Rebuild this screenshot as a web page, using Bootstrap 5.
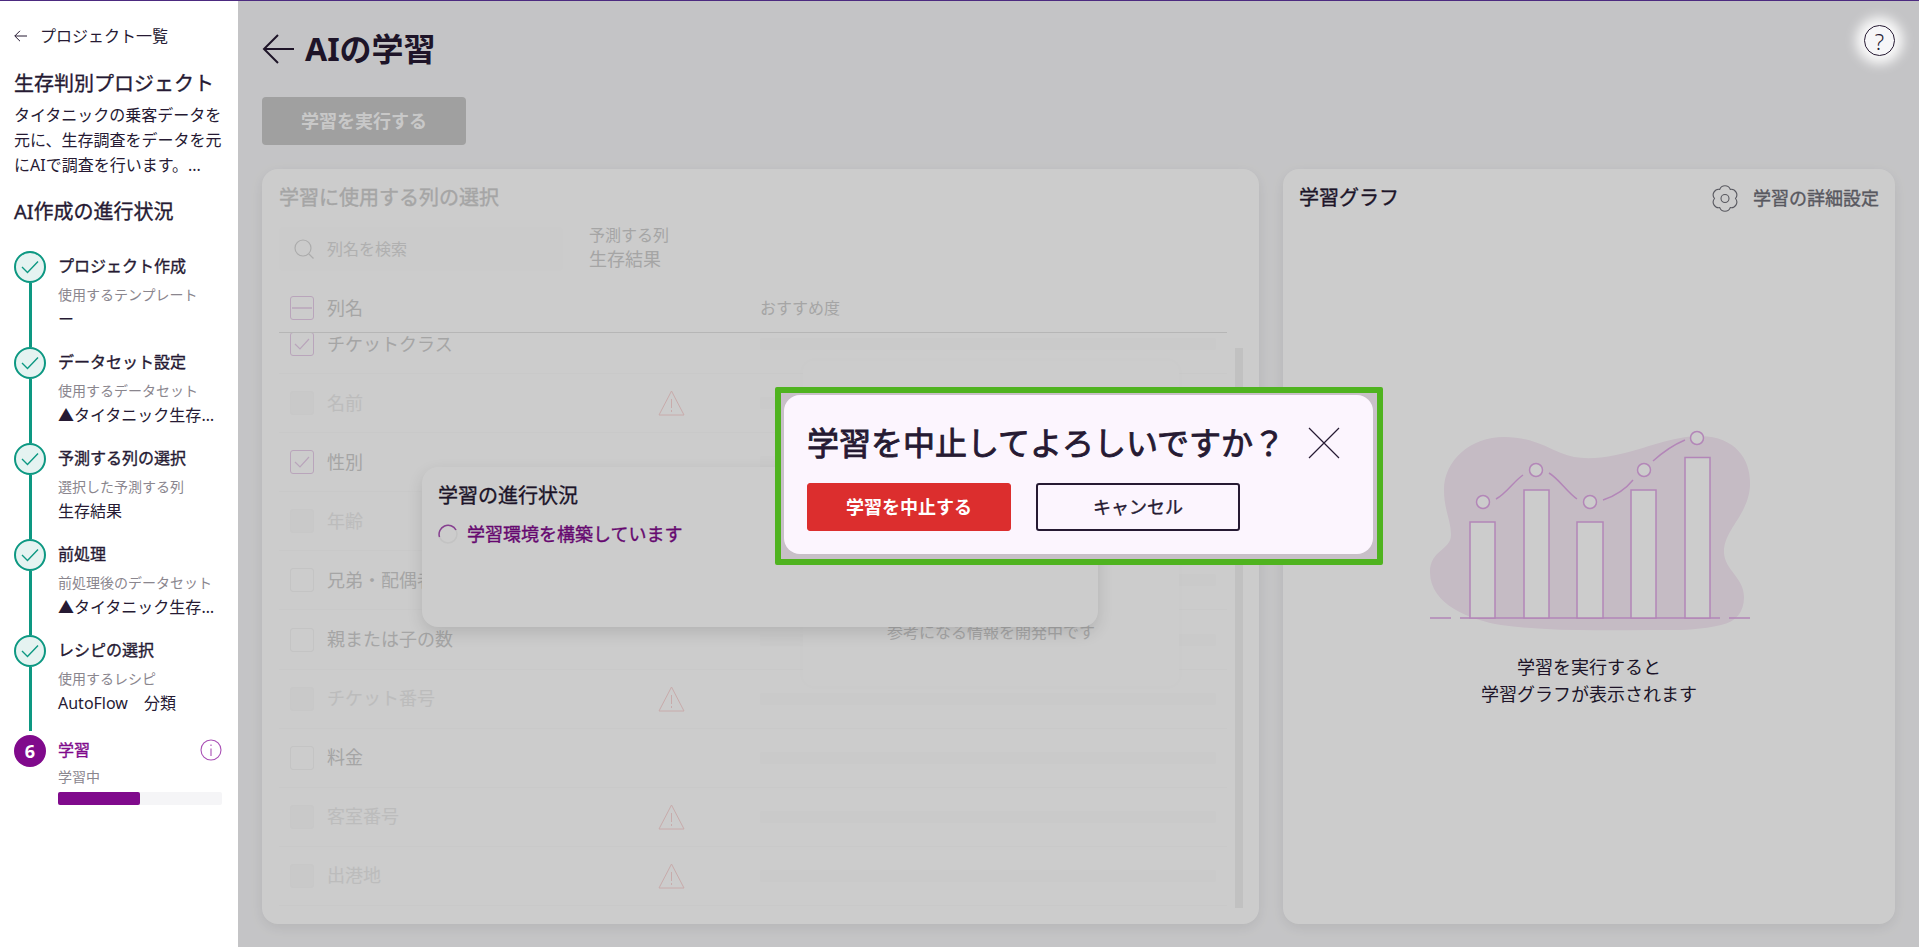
<!DOCTYPE html>
<html lang="ja">
<head>
    <meta charset="UTF-8">
    <meta name="viewport" content="width=device-width, initial-scale=1.0">
    <title>AIの学習</title>
    <link href="https://cdn.jsdelivr.net/npm/bootstrap@5.3.0/dist/css/bootstrap.min.css" rel="stylesheet">
    <style>
        html, body { height: 100%; overflow: hidden; }
        body {
            font-family: "Noto Sans", "Noto Sans CJK JP", sans-serif;
            color: #261a33;
            background: #fff;
        }

        .app-shell { height: 947px; border-top: 1px solid #4c2a80; }

        /* no medium weight installed, thicken the regular one */
        .semi-text { font-weight: 400; -webkit-text-stroke: .35px currentColor; }

        /* sidebar */
        .side-panel { width: 238px; flex: 0 0 238px; background: #fff; padding: 23px 16px 0 14px; }
        .back-link { font-size: 16px; line-height: 24px; color: #261a33; gap: 13px; }
        .project-name { font-size: 20px; line-height: 28px; margin: 22px 0 0 0; }
        .project-desc { font-size: 16px; line-height: 25px; margin: 5px -8px 0 0; }
        .progress-title { font-size: 20px; line-height: 28px; margin: 20px 0 25px 0; }
        .step-row { height: 96px; gap: 12px; }
        .step-row.step-tall { height: 100px; }
        .step-rail { width: 32px; flex: 0 0 32px; }
        .step-dot {
            width: 32px; height: 32px; border-radius: 50%;
            border: 2px solid #0d9882; background: #e5f3f1;
            flex: 0 0 32px;
        }
        .step-dot.step-now { background: #800a8c; border-color: #800a8c; color: #fff; font-size: 18px; font-weight: 700; }
        .step-line { width: 3px; flex: 1 1 auto; background: #0d9882; margin-left: 15px; }
        .step-tall .step-line { margin-bottom: 4px; }
        .step-body { min-width: 0; flex: 1 1 auto; padding-top: 3px; }
        .step-name { font-size: 16px; line-height: 24px; }
        .step-sub { font-size: 14px; line-height: 20px; color: #8a868e; margin-top: 7px; }
        .step-val { font-size: 16px; line-height: 24px; margin-top: 2px; }
        .learn-track { height: 13px; background: #f5f5f7; border-radius: 2px; margin-top: 5px; }
        .learn-fill { height: 100%; background: #800a8c; border-radius: 2px; }

        /* main area */
        .main-area { position: relative; background: #f6f6f8; padding: 26px 24px 23px; min-width: 0; }
        .dim-layer { position: absolute; inset: 0; background: rgba(0, 0, 0, .2); z-index: 10; }
        .page-title { font-size: 32px; line-height: 44px; font-weight: 700; gap: 11px; margin: 0; }
        .help-btn {
            position: relative; z-index: 20;
            width: 31px; height: 31px; border-radius: 50%; margin-top: -2px;
            background: #f6f6f8; border: 1.5px solid #261a33;
            box-shadow: 0 0 12px 8px rgba(255, 255, 255, .92);
            font-size: 22px; line-height: 1; font-weight: 300;
        }
        .run-btn {
            width: 204px; height: 48px; margin-top: 26px;
            background: #c8c8c8; border: 0; border-radius: 4px;
            color: #fbfbfb; font-size: 18px; font-weight: 700; padding: 0;
        }
        .cards-row { gap: 24px; margin-top: 24px; min-height: 0; }
        .panel-box {
            background: #fff; border: 0; border-radius: 16px;
            box-shadow: 0 4px 14px rgba(0, 0, 0, .08);
            position: relative;
        }
        .pick-panel { width: 997px; flex: 0 0 997px; padding: 15px 0 0 17px; color: #cfcfcf; }
        .graph-panel { flex: 1 1 auto; padding: 15px 16px 0; }
        .panel-head { font-size: 20px; line-height: 28px; }
        .search-row { margin-top: 12px; height: 48px; gap: 26px; }
        .search-field {
            width: 284px; height: 44px; gap: 13px; padding-left: 15px; margin-top: 3px;
            background: #fefefe; border-radius: 4px;
            font-size: 16px; color: #dcdcdc;
        }
        .target-label { font-size: 16px; line-height: 22px; }
        .target-val { font-size: 18px; line-height: 26px; }
        .head-row {
            width: 948px; height: 49px; margin-top: 12px; padding-left: 11px;
            border-bottom: 1px solid #e4e4e4; font-size: 18px; gap: 13px;
        }
        .rec-label { font-size: 16px; margin-left: 384px; }
        .tick-box {
            width: 24px; height: 24px; flex: 0 0 24px; border-radius: 3px;
            border: 1.5px solid #e8cfea; background: #fff;
        }
        .tick-box.is-plain { border-color: #f5f5f5; }
        .tick-box.is-off { border-color: #fafafa; background: #fcfcfc; }
        .list-wrap { flex: 1 1 auto; min-height: 0; overflow: hidden; gap: 8px; }
        .col-list { width: 948px; flex: 0 0 948px; margin-top: -18px; }
        .col-row {
            height: 59.1px; padding-left: 11px;
            border-bottom: 1px solid #fcfcfc; font-size: 18px;
        }
        .col-name { width: 331px; margin-left: 13px; white-space: nowrap; }
        .col-row.is-muted .col-name { color: #ececec; }
        .warn-slot { width: 27px; flex: 0 0 27px; height: 26px; }
        .score-bar { width: 456px; height: 12px; margin-left: 75px; background: #fdfdfd; border-radius: 2px; }
        .scroll-thumb { width: 8px; flex: 0 0 8px; background: #f2f2f2; margin: 15px 0 16px; }
        .wip-box {
            position: absolute; left: 541px; top: 192px; width: 376px; height: 325px;
            background: #fff; border-radius: 10px;
            box-shadow: 0 0 10px rgba(0, 0, 0, .015);
            padding-bottom: 43px; font-size: 16px; line-height: 22px;
        }
        .status-panel {
            position: absolute; left: 160px; top: 298px; width: 676px; height: 160px;
            background: #fff; border-radius: 16px; padding: 15px 16px;
            box-shadow: 0 6px 16px rgba(0, 0, 0, .12);
            color: #261a33;
        }
        .status-head { font-size: 20px; line-height: 28px; }
        .status-line { font-size: 18px; line-height: 26px; color: #800a8c; gap: 9px; margin-top: 11px; }
        .detail-link { font-size: 18px; color: #6f6f78; gap: 15px; }
        .graph-empty { flex: 1 1 auto; padding-top: 218px; }
        .graph-note { font-size: 18px; line-height: 27px; margin-top: 21px; }

        /* abort dialog */
        .abort-frame {
            position: absolute; left: 537px; top: 386px; width: 608px; height: 178px; z-index: 20;
            border: 6px solid #4fb31f; border-radius: 2px;
            background: #c8c0c8; padding: 2px 4px 5px 3px;
        }
        .abort-box { background: #fcf5fe; border: 0; border-radius: 16px; height: 100%; padding: 28px 33px 0 23px; }
        .abort-title { font-size: 32px; line-height: 40px; margin: 0; -webkit-text-stroke: .9px currentColor; }
        .abort-actions { gap: 25px; margin-top: 20px; }
        .abort-btn { width: 204px; height: 48px; border-radius: 3px; font-size: 18px; padding: 0; }
        .abort-go { background: #dc2e2e; border-color: #dc2e2e; color: #fff; font-weight: 700; }
        .abort-no { background: transparent; border: 2px solid #261a33; color: #261a33; }
    </style>
</head>
<body>
<div class="app-shell d-flex">

    <!-- Sidebar -->
    <aside class="side-panel">
        <div class="back-link d-flex align-items-center">
            <svg width="13" height="12" viewBox="0 0 13 12" fill="none" stroke="#261a33" stroke-width="1"><path d="M13 6H.8M6 .8.8 6 6 11.2"/></svg>
            <span>プロジェクト一覧</span>
        </div>
        <div class="project-name semi-text">生存判別プロジェクト</div>
        <div class="project-desc">タイタニックの乗客データを元に、生存調査をデータを元にAIで調査を行います。...</div>
        <div class="progress-title semi-text">AI作成の進行状況</div>

        <div class="step-row d-flex">
            <div class="step-rail d-flex flex-column">
                <div class="step-dot d-flex align-items-center justify-content-center"><svg width="18" height="14" viewBox="0 0 18 14" fill="none" stroke="#0d9882" stroke-width="1.4"><path d="M1 7l5.5 5.5L17 1.5"/></svg></div>
                <div class="step-line"></div>
            </div>
            <div class="step-body">
                <div class="step-name semi-text">プロジェクト作成</div>
                <div class="step-sub">使用するテンプレート</div>
                <div class="step-val">ー</div>
            </div>
        </div>
        <div class="step-row d-flex">
            <div class="step-rail d-flex flex-column">
                <div class="step-dot d-flex align-items-center justify-content-center"><svg width="18" height="14" viewBox="0 0 18 14" fill="none" stroke="#0d9882" stroke-width="1.4"><path d="M1 7l5.5 5.5L17 1.5"/></svg></div>
                <div class="step-line"></div>
            </div>
            <div class="step-body">
                <div class="step-name semi-text">データセット設定</div>
                <div class="step-sub">使用するデータセット</div>
                <div class="step-val text-truncate">▲タイタニック生存者データ</div>
            </div>
        </div>
        <div class="step-row d-flex">
            <div class="step-rail d-flex flex-column">
                <div class="step-dot d-flex align-items-center justify-content-center"><svg width="18" height="14" viewBox="0 0 18 14" fill="none" stroke="#0d9882" stroke-width="1.4"><path d="M1 7l5.5 5.5L17 1.5"/></svg></div>
                <div class="step-line"></div>
            </div>
            <div class="step-body">
                <div class="step-name semi-text">予測する列の選択</div>
                <div class="step-sub">選択した予測する列</div>
                <div class="step-val">生存結果</div>
            </div>
        </div>
        <div class="step-row d-flex">
            <div class="step-rail d-flex flex-column">
                <div class="step-dot d-flex align-items-center justify-content-center"><svg width="18" height="14" viewBox="0 0 18 14" fill="none" stroke="#0d9882" stroke-width="1.4"><path d="M1 7l5.5 5.5L17 1.5"/></svg></div>
                <div class="step-line"></div>
            </div>
            <div class="step-body">
                <div class="step-name semi-text">前処理</div>
                <div class="step-sub">前処理後のデータセット</div>
                <div class="step-val text-truncate">▲タイタニック生存者データ</div>
            </div>
        </div>
        <div class="step-row step-tall d-flex">
            <div class="step-rail d-flex flex-column">
                <div class="step-dot d-flex align-items-center justify-content-center"><svg width="18" height="14" viewBox="0 0 18 14" fill="none" stroke="#0d9882" stroke-width="1.4"><path d="M1 7l5.5 5.5L17 1.5"/></svg></div>
                <div class="step-line"></div>
            </div>
            <div class="step-body">
                <div class="step-name semi-text">レシピの選択</div>
                <div class="step-sub">使用するレシピ</div>
                <div class="step-val">AutoFlow　分類</div>
            </div>
        </div>
        <div class="step-row d-flex">
            <div class="step-rail">
                <div class="step-dot step-now d-flex align-items-center justify-content-center">6</div>
            </div>
            <div class="step-body">
                <div class="d-flex justify-content-between align-items-center">
                    <div class="step-name semi-text" style="color:#800a8c">学習</div>
                    <svg width="22" height="22" viewBox="0 0 22 22" fill="none" stroke="#a94fb5" stroke-width="1.1"><circle cx="11" cy="11" r="10"/><path d="M11 9.5v7.5M11 5.5v1.5"/></svg>
                </div>
                <div class="step-sub" style="margin-top:5px">学習中</div>
                <div class="learn-track"><div class="learn-fill" style="width:50%"></div></div>
            </div>
        </div>
    </aside>

    <!-- Main -->
    <main class="main-area flex-grow-1 d-flex flex-column">
        <div class="d-flex justify-content-between align-items-start">
            <h1 class="page-title d-flex align-items-center">
                <svg width="32" height="30" viewBox="0 0 32 30" fill="none" stroke="#261a33" stroke-width="2"><path d="M32 15H2M16 1 2 15l14 14"/></svg>
                <span>AIの学習</span>
            </h1>
            <div class="help-btn d-flex align-items-center justify-content-center">?</div>
        </div>
        <button class="run-btn btn" type="button">学習を実行する</button>

        <div class="cards-row d-flex flex-grow-1">
            <!-- Column picker -->
            <section class="panel-box pick-panel d-flex flex-column">
                <div class="panel-head semi-text">学習に使用する列の選択</div>
                <div class="search-row d-flex align-items-start">
                    <div class="search-field d-flex align-items-center">
                        <svg width="20" height="20" viewBox="0 0 20 20" fill="none" stroke="#d8d8d8" stroke-width="1.2"><circle cx="9" cy="9" r="8"/><path d="m15 15 4.500 4.500"/></svg>
                        <span>列名を検索</span>
                    </div>
                    <div>
                        <div class="target-label">予測する列</div>
                        <div class="target-val">生存結果</div>
                    </div>
                </div>
                <div class="head-row d-flex align-items-center">
                    <div class="tick-box d-flex align-items-center justify-content-center"><svg width="20" height="2" viewBox="0 0 20 2" stroke="#e8cfea" stroke-width="1.5"><path d="M0 1h20"/></svg></div>
                    <span>列名</span>
                    <span class="rec-label">おすすめ度</span>
                </div>

                <div class="list-wrap d-flex">
                    <div class="col-list flex-shrink-0">
                        <div class="col-row d-flex align-items-center">
                            <div class="tick-box d-flex align-items-center justify-content-center"><svg width="16" height="12" viewBox="0 0 16 12" fill="none" stroke="#e8cfea" stroke-width="1.2"><path d="m1 6 5 5L15 1"/></svg></div>
                            <div class="col-name">チケットクラス</div><div class="warn-slot"></div><div class="score-bar"></div>
                        </div>
                        <div class="col-row is-muted d-flex align-items-center">
                            <div class="tick-box is-off"></div>
                            <div class="col-name">名前</div>
                            <svg class="warn-slot" viewBox="0 0 27 26" fill="none" stroke="#fbd6d6" stroke-width="1"><path d="M13.500 1 26 25H1zM13.500 9v9M13.500 20v2"/></svg>
                            <div class="score-bar"></div>
                        </div>
                        <div class="col-row d-flex align-items-center">
                            <div class="tick-box d-flex align-items-center justify-content-center"><svg width="16" height="12" viewBox="0 0 16 12" fill="none" stroke="#e8cfea" stroke-width="1.2"><path d="m1 6 5 5L15 1"/></svg></div>
                            <div class="col-name">性別</div><div class="warn-slot"></div><div class="score-bar"></div>
                        </div>
                        <div class="col-row is-muted d-flex align-items-center">
                            <div class="tick-box is-off"></div>
                            <div class="col-name">年齢</div><div class="warn-slot"></div><div class="score-bar"></div>
                        </div>
                        <div class="col-row d-flex align-items-center">
                            <div class="tick-box is-plain"></div>
                            <div class="col-name">兄弟・配偶者の数</div><div class="warn-slot"></div><div class="score-bar"></div>
                        </div>
                        <div class="col-row d-flex align-items-center">
                            <div class="tick-box is-plain"></div>
                            <div class="col-name">親または子の数</div><div class="warn-slot"></div><div class="score-bar"></div>
                        </div>
                        <div class="col-row is-muted d-flex align-items-center">
                            <div class="tick-box is-off"></div>
                            <div class="col-name">チケット番号</div>
                            <svg class="warn-slot" viewBox="0 0 27 26" fill="none" stroke="#fbd6d6" stroke-width="1"><path d="M13.500 1 26 25H1zM13.500 9v9M13.500 20v2"/></svg>
                            <div class="score-bar"></div>
                        </div>
                        <div class="col-row d-flex align-items-center">
                            <div class="tick-box is-plain"></div>
                            <div class="col-name">料金</div><div class="warn-slot"></div><div class="score-bar"></div>
                        </div>
                        <div class="col-row is-muted d-flex align-items-center">
                            <div class="tick-box is-off"></div>
                            <div class="col-name">客室番号</div>
                            <svg class="warn-slot" viewBox="0 0 27 26" fill="none" stroke="#fbd6d6" stroke-width="1"><path d="M13.500 1 26 25H1zM13.500 9v9M13.500 20v2"/></svg>
                            <div class="score-bar"></div>
                        </div>
                        <div class="col-row is-muted d-flex align-items-center">
                            <div class="tick-box is-off"></div>
                            <div class="col-name">出港地</div>
                            <svg class="warn-slot" viewBox="0 0 27 26" fill="none" stroke="#fbd6d6" stroke-width="1"><path d="M13.500 1 26 25H1zM13.500 9v9M13.500 20v2"/></svg>
                            <div class="score-bar"></div>
                        </div>
                    </div>
                    <div class="scroll-thumb"></div>
                </div>

                <div class="wip-box d-flex align-items-end justify-content-center">参考になる情報を開発中です</div>

                <div class="status-panel">
                    <div class="status-head semi-text">学習の進行状況</div>
                    <div class="status-line semi-text d-flex align-items-center">
                        <svg width="20" height="20" viewBox="0 0 20 20" fill="none" stroke-width="1.5"><circle cx="10" cy="10" r="9" stroke="#f4f4f4"/><path d="M1.500 13A9 9 0 0 1 18 6" stroke="#a94fb5"/></svg>
                        <span>学習環境を構築しています</span>
                    </div>
                </div>
            </section>

            <!-- Graph -->
            <section class="panel-box graph-panel d-flex flex-column">
                <div class="d-flex justify-content-between align-items-center">
                    <div class="panel-head semi-text">学習グラフ</div>
                    <div class="detail-link semi-text d-flex align-items-center">
                        <svg width="26" height="27" viewBox="0 0 26 27" fill="none" stroke="#6f6f78" stroke-width="1.1"><circle cx="13" cy="13.500" r="4"/><path d="M18.250 4.400A5.600 5.600 0 0 0 7.750 4.400A5.600 5.600 0 0 0 2.500 13.500A5.600 5.600 0 0 0 7.750 22.600A5.600 5.600 0 0 0 18.250 22.600A5.600 5.600 0 0 0 23.500 13.500A5.600 5.600 0 0 0 18.250 4.400Z"/></svg>
                        <span>学習の詳細設定</span>
                    </div>
                </div>
                <div class="graph-empty d-flex flex-column align-items-center">
                    <svg width="323" height="203" viewBox="27 30 323 203" fill="none">
                        <path d="M103 37C130 37 145 47 160 53C175 59 190 60 215 55C245 49 270 36 300 36C335 37 350 60 349 85C348 115 322 130 323 153C324 170 343 178 343 197C343 212 335 222 320 225C295 231 270 230 250 230C200 230 150 232 100 225C70 220 29 205 29 172C29 150 50 150 50 135C50 120 43 110 43 90C43 60 70 37 103 37Z" fill="#f7eaf6"/>
                        <g stroke="#e0a8e6" stroke-width="1.500" fill="#fff">
                            <path d="M29 218H50M59 218H319M328 218H349" fill="none"/>
                            <rect x="69" y="122" width="25" height="96"/>
                            <rect x="123" y="90" width="25" height="128"/>
                            <rect x="176" y="122" width="26" height="96"/>
                            <rect x="230" y="90" width="25" height="128"/>
                            <rect x="284" y="57.500" width="25" height="160.500"/>
                            <circle cx="82" cy="102" r="6.500"/>
                            <circle cx="135" cy="70" r="6.500"/>
                            <circle cx="189" cy="102" r="6.500"/>
                            <circle cx="243" cy="70" r="6.500"/>
                            <circle cx="296" cy="38" r="6.500"/>
                            <path d="M95 99C105 94 113 81 122 75M148 73C158 79 166 92 176 99M202 100C214 96 224 90 232 80M252 61C262 52 272 45 284 40" fill="none"/>
                        </g>
                    </svg>
                    <div class="graph-note text-center">学習を実行すると<br>学習グラフが表示されます</div>
                </div>
            </section>
        </div>

        <div class="dim-layer"></div>

        <!-- Abort dialog -->
        <div class="abort-frame">
            <div class="card abort-box">
                <div class="d-flex justify-content-between align-items-center">
                    <h2 class="abort-title semi-text">学習を中止してよろしいですか？</h2>
                    <svg width="32" height="32" viewBox="0 0 32 32" fill="none" stroke="#261a33" stroke-width="1.2"><path d="m1 1 30 30M31 1 1 31"/></svg>
                </div>
                <div class="abort-actions d-flex">
                    <button class="btn abort-btn abort-go" type="button">学習を中止する</button>
                    <button class="btn abort-btn abort-no semi-text" type="button">キャンセル</button>
                </div>
            </div>
        </div>
    </main>
</div>
<script src="https://cdn.jsdelivr.net/npm/bootstrap@5.3.0/dist/js/bootstrap.bundle.min.js"></script>
</body>
</html>
